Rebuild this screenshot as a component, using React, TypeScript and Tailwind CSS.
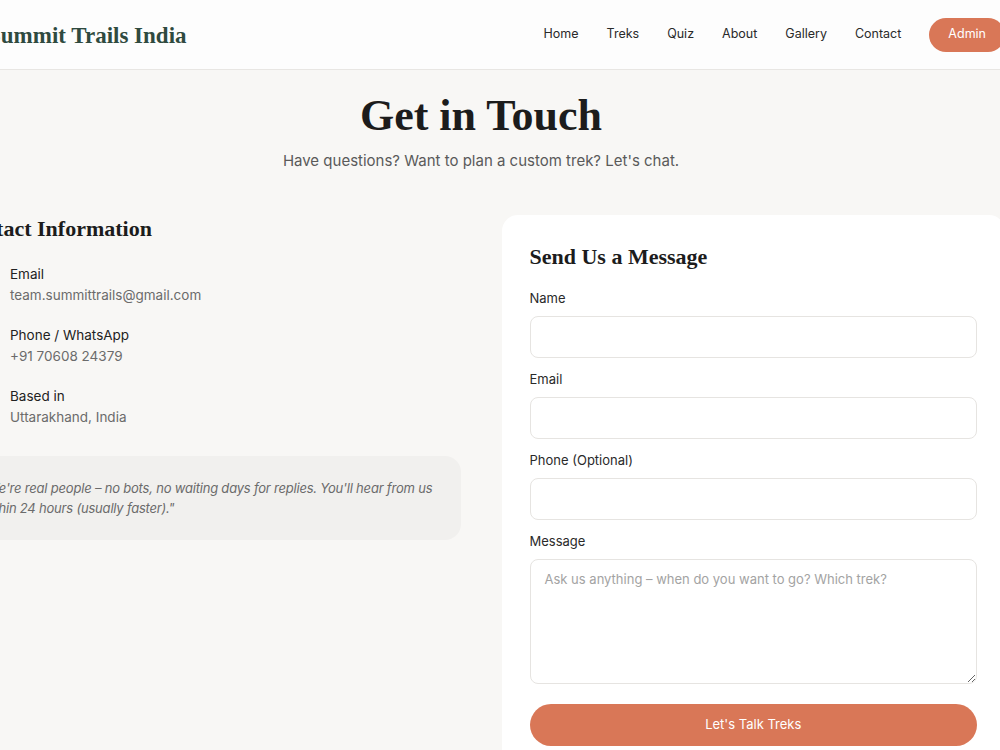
import { useState } from 'react';

const navLinks = ['Home', 'Treks', 'Quiz', 'About', 'Gallery', 'Contact'];

const contactItems = [
  { label: 'Email', value: 'team.summittrails@gmail.com' },
  { label: 'Phone / WhatsApp', value: '+91 70608 24379' },
  { label: 'Based in', value: 'Uttarakhand, India' },
];

const serif = "font-['Liberation_Serif',_'DejaVu_Serif',_serif]";

const Header = () => (
  <header className="bg-[#fdfdfd] border-b border-[#e8e6e3] h-[70px]">
    <div className="w-[1017px] ml-[-12px] h-full flex items-center justify-between">
      <a href="#" className={`${serif} pt-[3px] text-[23px] font-bold text-[#2f4a3f]`}>
        Summit Trails India
      </a>
      <nav className="flex items-center">
        {navLinks.map((link) => (
          <a key={link} href="#" className="text-[12.5px] text-[#2a2a2a] mr-[28px]">
            {link}
          </a>
        ))}
        <a href="#" className="bg-[#d97757] text-white text-[12.5px] rounded-full h-[34px] px-[19px] flex items-center">
          Admin
        </a>
      </nav>
    </div>
  </header>
);

const Field = ({ label, type = 'text' }: { label: string; type?: string }) => (
  <div className="flex flex-col">
    <label className="text-[13px] leading-[17px] text-[#2a2a2a] mb-[9px]">{label}</label>
    <input
      type={type}
      className="h-[42px] rounded-lg border border-[#e6e4e1] bg-white px-[14px] text-[13px] outline-none"
    />
  </div>
);

export default function App() {
  const [message, setMessage] = useState('');

  return (
    <div className="min-h-screen bg-[#f8f7f5] overflow-hidden font-['Inter',_'Noto_Sans',_sans-serif]">
      <Header />

      <main className="w-[1048px] ml-[-43px] pt-[18px] pb-16">
        <div className="text-center">
          <h1 className={`${serif} text-[44px] leading-[56px] font-bold text-[#1c1c1c]`}>Get in Touch</h1>
          <p className="mt-[5px] text-[15px] leading-[24px] text-[#5a5a5a]">
            Have questions? Want to plan a custom trek? Let's chat.
          </p>
        </div>

        <div className="grid grid-cols-2 gap-[41px] mt-[42px]">
          {/* contact details */}
          <div>
            <h2 className={`${serif} text-[22px] leading-[28px] font-bold text-[#1c1c1c]`}>Contact Information</h2>
            <div className="mt-[21px] flex flex-col gap-[20px] pl-[53px]">
              {contactItems.map((item) => (
                <div key={item.label}>
                  <div className="text-[13.5px] text-[#222] leading-[20px]">{item.label}</div>
                  <div className="text-[13.5px] text-[#6b6b6b] leading-[20px] mt-[1px]">{item.value}</div>
                </div>
              ))}
            </div>
            <div className="mt-[29px] bg-[#f1f0ee] rounded-2xl pl-[24px] pr-[14px] py-[22px]">
              <p className="text-[13px] italic text-[#6b6b6b] leading-[20px] tracking-[-0.2px]">
                "We're real people – no bots, no waiting days for replies. You'll hear from us within 24 hours (usually faster)."
              </p>
            </div>
          </div>

          {/* message form */}
          <div className="bg-white rounded-2xl px-[28px] pt-[26px] pb-[28px]">
            <h2 className={`${serif} text-[22px] leading-[32px] font-bold text-[#1c1c1c]`}>Send Us a Message</h2>
            <form className="mt-[17px] flex flex-col gap-[13px]" onSubmit={(e) => e.preventDefault()}>
              <Field label="Name" />
              <Field label="Email" type="email" />
              <Field label="Phone (Optional)" type="tel" />
              <div className="flex flex-col">
                <label className="text-[13px] leading-[17px] text-[#2a2a2a] mb-[9px]">Message</label>
                <textarea
                  value={message}
                  onChange={(e) => setMessage(e.target.value)}
                  placeholder="Ask us anything – when do you want to go? Which trek?"
                  className="h-[125px] rounded-lg border border-[#e6e4e1] px-[14px] py-[10px] text-[13px] placeholder:text-[#a3a3a3] outline-none"
                />
              </div>
              <button type="submit" className="mt-[7px] h-[42px] rounded-full bg-[#d97757] text-white text-[13px]">
                Let's Talk Treks
              </button>
            </form>
          </div>
        </div>
      </main>
    </div>
  );
}
